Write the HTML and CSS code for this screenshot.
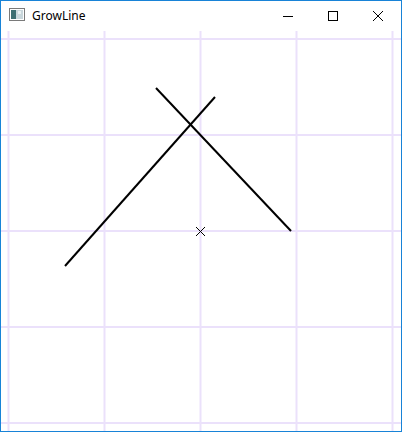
FILE: index.html
```html
<!DOCTYPE html>
<html lang="en">
<head>
  <meta charset="UTF-8">
  <title>GrowLine</title>
  <link rel="stylesheet" href="styles.css">
</head>
<body>
  <div class="window">
    <div class="titlebar">
      <svg class="app-icon" width="16" height="16" viewBox="0 0 16 16">
        <rect x="0.5" y="1.5" width="15" height="12" fill="#fff" stroke="#7a7a7a"/>
        <rect x="2" y="3" width="5" height="9" fill="#3d6f73"/>
        <rect x="7" y="3" width="7" height="9" fill="#c9d7dc"/>
        <rect x="9" y="4" width="3" height="3" fill="#e9f0f2"/>
      </svg>
      <span class="title">GrowLine</span>
      <div class="controls">
        <button class="ctl">
          <svg width="10" height="10" viewBox="0 0 10 10"><path d="M0 5.5h10" stroke="#000" stroke-width="1"/></svg>
        </button>
        <button class="ctl">
          <svg width="10" height="10" viewBox="0 0 10 10"><rect x="0.5" y="0.5" width="9" height="9" fill="none" stroke="#000"/></svg>
        </button>
        <button class="ctl">
          <svg width="10" height="10" viewBox="0 0 10 10"><path d="M0 0L10 10M10 0L0 10" stroke="#000" stroke-width="1"/></svg>
        </button>
      </div>
    </div>
    <div class="client">
      <svg class="canvas" width="400" height="400" viewBox="1 31 400 400">
        <g stroke="#ebe1fb" stroke-width="2">
          <path d="M8.5 31V431M104.5 31V431M200.5 31V431M296.5 31V431M392.5 31V431"/>
          <path d="M1 39H401M1 135H401M1 231H401M1 327H401M1 423H401"/>
        </g>
        <g stroke="#000" stroke-width="2" fill="none">
          <path d="M65 266L215 97"/>
          <path d="M156 88L291 231"/>
        </g>
        <path d="M196 227l9 9M205 227l-9 9" stroke="#000" stroke-width="1"/>
      </svg>
    </div>
  </div>
</body>
</html>
```
FILE: styles.css
```css
body {
  margin: 0;
  padding: 0;
  background: #fff;
  font-family: "Noto Sans", "Open Sans", sans-serif;
}
.window {
  width: 402px;
  height: 432px;
  box-sizing: border-box;
  border: 1px solid #1883d7;
  display: flex;
  flex-direction: column;
  overflow: hidden;
}
.titlebar {
  height: 30px;
  display: flex;
  align-items: center;
  background: #fff;
}
.app-icon {
  margin-left: 8px;
  margin-top: -2px;
}
.title {
  margin-left: 7px;
  font-size: 12px;
  color: #000;
  margin-top: -1px;
}
.controls {
  margin-left: auto;
  margin-right: 1px;
  display: flex;
  align-self: stretch;
}
.ctl {
  width: 45px;
  border: none;
  background: none;
  padding: 0;
  display: flex;
  align-items: center;
  justify-content: center;
  margin-top: -1px;
}
.client {
  flex: 1;
  position: relative;
}
.canvas {
  display: block;
}
```
